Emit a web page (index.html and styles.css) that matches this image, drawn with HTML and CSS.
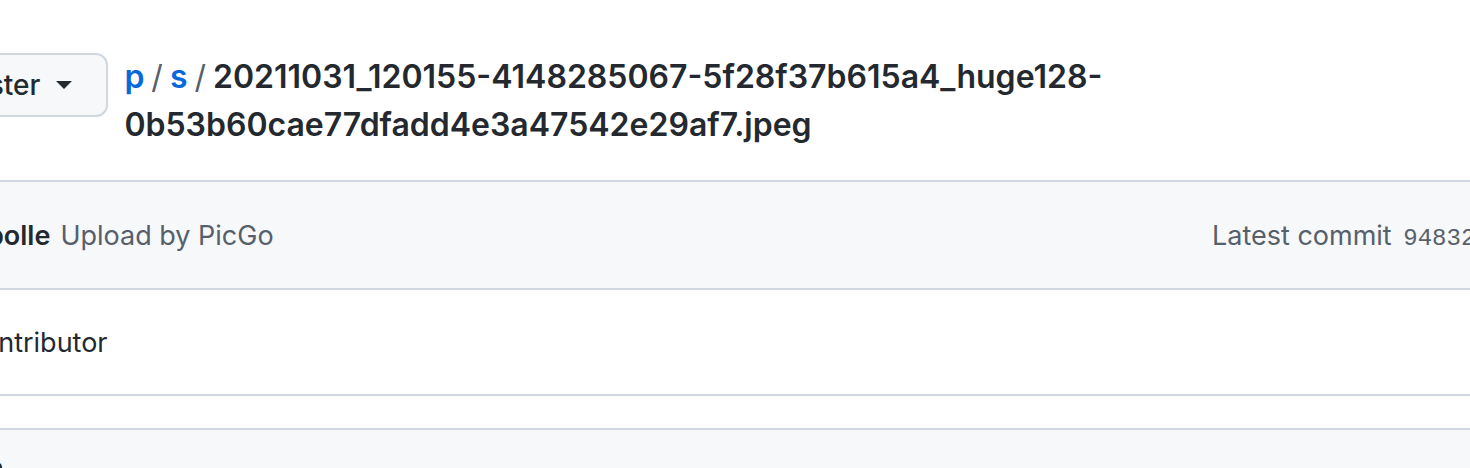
FILE: index.html
```html
<!DOCTYPE html>
<html lang="en">
<head>
<meta charset="utf-8">
<title>20211031_120155-4148285067-5f28f37b615a4_huge128-0b53b60cae77dfadd4e3a47542e29af7.jpeg</title>
<link rel="stylesheet" href="styles.css">
</head>
<body>
<div class="page">
  <div class="file-nav">
    <button class="branch-btn" type="button">
      <span class="branch-name">master</span>
      <span class="caret"></span>
    </button>
    <h2 class="breadcrumb">
      <a class="crumb" href="#">p</a><span class="sep">/</span><a class="crumb" href="#">s</a><span class="sep">/</span><strong class="final-path">20211031_120155-4148285067-5f28f37b615a4_huge128-<wbr>0b53b60cae77dfadd4e3a47542e29af7.jpeg</strong>
    </h2>
  </div>

  <div class="box">
    <div class="box-header">
      <div class="commit-info">
        <span class="avatar"></span>
        <a class="author" href="#">bolle</a>
        <span class="message">Upload by PicGo</span>
      </div>
      <div class="latest">Latest commit <span class="sha">94832f1</span> on 31 Oct 2021</div>
    </div>
    <div class="box-row">
      <span class="contrib"><strong>1</strong> contributor</span>
    </div>
  </div>

  <div class="box box-file">
    <div class="box-header file-header">
      <span class="file-info">2.1 MB</span>
    </div>
  </div>
</div>
</body>
</html>
```

FILE: styles.css
```css
html, body {
  margin: 0;
  padding: 0;
  background: #ffffff;
  overflow: hidden;
}

body {
  font-family: Inter, "Noto Sans", "Liberation Sans", sans-serif;
  color: #24292f;
  width: 1470px;
  height: 468px;
}

.page {
  margin-left: -86px;
  width: 1800px;
  padding-top: 53px;
}

.file-nav {
  display: flex;
  align-items: flex-start;
  margin-bottom: 31px;
}

.branch-btn {
  display: flex;
  align-items: center;
  gap: 16px;
  height: 64px;
  padding: 0 34px 0 32px;
  border: 2px solid #d0d7de;
  border-radius: 12px;
  background: #f6f8fa;
  font-family: inherit;
  font-size: 28px;
  font-weight: 500;
  color: #24292f;
  flex-shrink: 0;
}

.caret {
  width: 0;
  height: 0;
  border-style: solid;
  border-width: 8px 8px 0 8px;
  border-color: #24292f transparent transparent transparent;
}

.breadcrumb {
  margin: 0 0 0 16px;
  max-width: 1100px;
  font-size: 32px;
  line-height: 48px;
  font-weight: 400;
}

.crumb {
  color: #0969da;
  text-decoration: none;
  font-weight: 600;
}

.sep {
  color: #57606a;
  margin: 0 7px;
}

.final-path {
  font-weight: 600;
  color: #24292f;
}

.box {
  border-top: 2px solid #d0d7de;
  border-bottom: 2px solid #d0d7de;
}

.box-header {
  display: flex;
  align-items: center;
  height: 106px;
  background: #f6f8fa;
  border-bottom: 2px solid #d0d7de;
  font-size: 27px;
}

.commit-info {
  display: flex;
  align-items: center;
  padding-left: 13px;
}

.avatar {
  width: 48px;
  height: 48px;
  border-radius: 50%;
  background: #c9d1d9;
  margin-right: 12px;
}

.author {
  color: #24292f;
  font-weight: 600;
  text-decoration: none;
  margin-right: 10px;
}

.message {
  color: #57606a;
}

.latest {
  color: #57606a;
  margin-left: auto;
  width: 502px;
  white-space: nowrap;
}

.sha {
  font-family: "Liberation Mono", monospace;
  font-size: 24px;
  margin-left: 4px;
}

.box-row {
  display: flex;
  align-items: center;
  height: 104px;
  padding-left: 34px;
  font-size: 27px;
}

.contrib strong {
  font-weight: 400;
}

.box-file {
  margin-top: 32px;
  border-bottom: none;
}

.file-header {
  border-bottom: none;
  padding-left: 3px;
  align-items: flex-start;
  padding-top: 26px;
  height: 80px;
}

.file-info {
  color: #24292f;
  font-weight: 600;
  font-size: 28px;
}
```
